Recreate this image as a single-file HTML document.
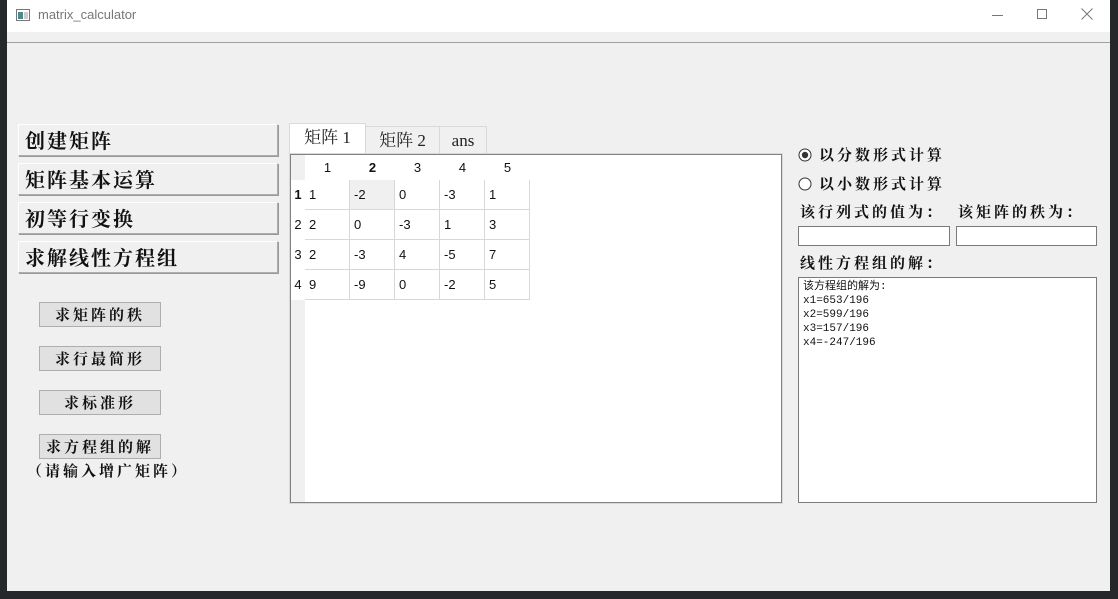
<!DOCTYPE html>
<html><head><meta charset="utf-8"><style>
*{box-sizing:border-box;margin:0;padding:0}
body{width:1118px;height:599px;background:#25272b;position:relative;overflow:hidden;font-family:"Liberation Sans","Noto Sans CJK SC",sans-serif}
.a{position:absolute}
.win{left:7px;top:0;width:1103px;height:591px;background:#f0f0f0}
.title{left:7px;top:0;width:1103px;height:32px;background:#fff;font-size:13px;color:#777}
.cal{font-family:"Noto Serif CJK SC","WenQuanYi Zen Hei",serif;font-weight:bold;color:#111}
.big{left:18px;width:260px;height:32px;background:#f0f0f0;border:1px solid #adadad;border-top-color:#fff;border-left-color:#fff;box-shadow:1px 1px 0 #999;font-size:20px;line-height:30px;padding-left:6px;letter-spacing:2px}
.sm{left:39px;width:122px;height:25px;background:#e1e1e1;border:1px solid #adadad;font-size:15px;line-height:23px;text-align:center;letter-spacing:3px}
.tab{top:124px;height:30px;border:1px solid #d9d9d9;border-bottom:none;font-family:"Liberation Serif","Noto Serif CJK SC",serif;font-size:17px;line-height:28px;text-align:center;color:#222;background:#f0f0f0}
.cell{position:absolute;height:30px;width:45px;border-right:1px solid #d8d8d8;border-bottom:1px solid #d8d8d8;font-size:13px;line-height:30px;padding-left:4px;color:#111;background:#fff}
.ch{position:absolute;top:0;height:25px;width:45px;text-align:center;font-size:13px;line-height:25px;color:#111}
.rh{position:absolute;left:0;width:14px;height:30px;font-size:13px;line-height:30px;text-align:center;color:#111}
.inp{top:226px;height:20px;background:#fff;border:1px solid #7a7a7a}
.lbl{font-size:15px;letter-spacing:3px}
</style></head><body>
<div class="a win"></div>
<div class="a title">
 <svg class="a" style="left:9px;top:9px" width="14" height="12"><rect x="0.5" y="0.5" width="13" height="11" fill="#fff" stroke="#777"/><rect x="2" y="3" width="5" height="7" fill="#4a8a8a"/><rect x="8" y="3" width="4" height="7" fill="#ccc"/></svg>
 <span class="a" style="left:31px;top:7px">matrix_calculator</span>
 <div class="a" style="left:985px;top:15px;width:11px;height:1px;background:#777"></div>
 <div class="a" style="left:1030px;top:9px;width:10px;height:10px;border:1px solid #777"></div>
 <svg class="a" style="left:1074px;top:8px" width="12" height="12"><path d="M0.5 0.5L11.5 11.5M11.5 0.5L0.5 11.5" stroke="#777"/></svg>
</div>
<div class="a" style="left:7px;top:42px;width:1103px;height:1px;background:#a0a0a0"></div>

<div class="a big cal" style="top:124px">创建矩阵</div>
<div class="a big cal" style="top:163px">矩阵基本运算</div>
<div class="a big cal" style="top:202px">初等行变换</div>
<div class="a big cal" style="top:241px">求解线性方程组</div>

<div class="a sm cal" style="top:302px">求矩阵的秩</div>
<div class="a sm cal" style="top:346px">求行最简形</div>
<div class="a sm cal" style="top:390px">求标准形</div>
<div class="a sm cal" style="top:434px">求方程组的解</div>
<div class="a cal" style="left:27px;top:460px;font-size:15px;letter-spacing:3px">（请输入增广矩阵）</div>

<div class="a tab" style="left:289px;width:77px;background:#fff;top:123px;height:31px">矩阵 1</div>
<div class="a tab" style="left:365px;width:75px;top:126px;height:28px">矩阵 2</div>
<div class="a tab" style="left:439px;width:48px;top:126px;height:28px">ans</div>
<div class="a" style="left:289px;top:153px;width:494px;height:351px;background:#fff;border:1px solid #d9d9d9"></div>
<div class="a" style="left:290px;top:154px;width:492px;height:349px;border:1px solid #828282;background:#fff">
 <div class="a" style="left:0;top:0;width:14px;height:347px;background:#f0f0f0"></div>
 <div class="a" style="left:14px;top:0;width:226px;height:25px;background:#fff"></div>
 <div class="ch" style="left:14px">1</div><div class="ch" style="left:59px;font-weight:bold">2</div><div class="ch" style="left:104px">3</div><div class="ch" style="left:149px">4</div><div class="ch" style="left:194px">5</div>
 <div class="rh" style="top:25px;font-weight:bold;background:#fff">1</div><div class="rh" style="top:55px;background:#fff">2</div><div class="rh" style="top:85px;background:#fff">3</div><div class="rh" style="top:115px;background:#fff">4</div>
 <div style="position:absolute;left:14px;top:25px">
  <div class="cell" style="left:0;top:0">1</div><div class="cell" style="left:45px;top:0;background:#f0f0f0">-2</div><div class="cell" style="left:90px;top:0">0</div><div class="cell" style="left:135px;top:0">-3</div><div class="cell" style="left:180px;top:0">1</div>
  <div class="cell" style="left:0;top:30px">2</div><div class="cell" style="left:45px;top:30px">0</div><div class="cell" style="left:90px;top:30px">-3</div><div class="cell" style="left:135px;top:30px">1</div><div class="cell" style="left:180px;top:30px">3</div>
  <div class="cell" style="left:0;top:60px">2</div><div class="cell" style="left:45px;top:60px">-3</div><div class="cell" style="left:90px;top:60px">4</div><div class="cell" style="left:135px;top:60px">-5</div><div class="cell" style="left:180px;top:60px">7</div>
  <div class="cell" style="left:0;top:90px">9</div><div class="cell" style="left:45px;top:90px">-9</div><div class="cell" style="left:90px;top:90px">0</div><div class="cell" style="left:135px;top:90px">-2</div><div class="cell" style="left:180px;top:90px">5</div>
 </div>
</div>

<svg class="a" style="left:798px;top:148px" width="14" height="14"><circle cx="7" cy="7" r="6" fill="#fff" stroke="#333"/><circle cx="7" cy="7" r="3.2" fill="#333"/></svg>
<div class="a cal lbl" style="left:819px;top:144px">以分数形式计算</div>
<svg class="a" style="left:798px;top:177px" width="14" height="14"><circle cx="7" cy="7" r="6" fill="#fff" stroke="#333"/></svg>
<div class="a cal lbl" style="left:819px;top:173px">以小数形式计算</div>
<div class="a cal lbl" style="left:800px;top:201px">该行列式的值为：</div>
<div class="a cal lbl" style="left:958px;top:201px">该矩阵的秩为：</div>
<div class="a inp" style="left:798px;width:152px"></div>
<div class="a inp" style="left:956px;width:141px"></div>
<div class="a cal lbl" style="left:800px;top:252px">线性方程组的解：</div>
<div class="a" style="left:798px;top:277px;width:299px;height:226px;background:#fff;border:1px solid #7a7a7a;padding:2px 4px;font-family:'Liberation Mono','Noto Sans CJK SC',monospace;font-size:11px;line-height:14px;color:#111">该方程组的解为:<br>x1=653/196<br>x2=599/196<br>x3=157/196<br>x4=-247/196</div>
</body></html>
